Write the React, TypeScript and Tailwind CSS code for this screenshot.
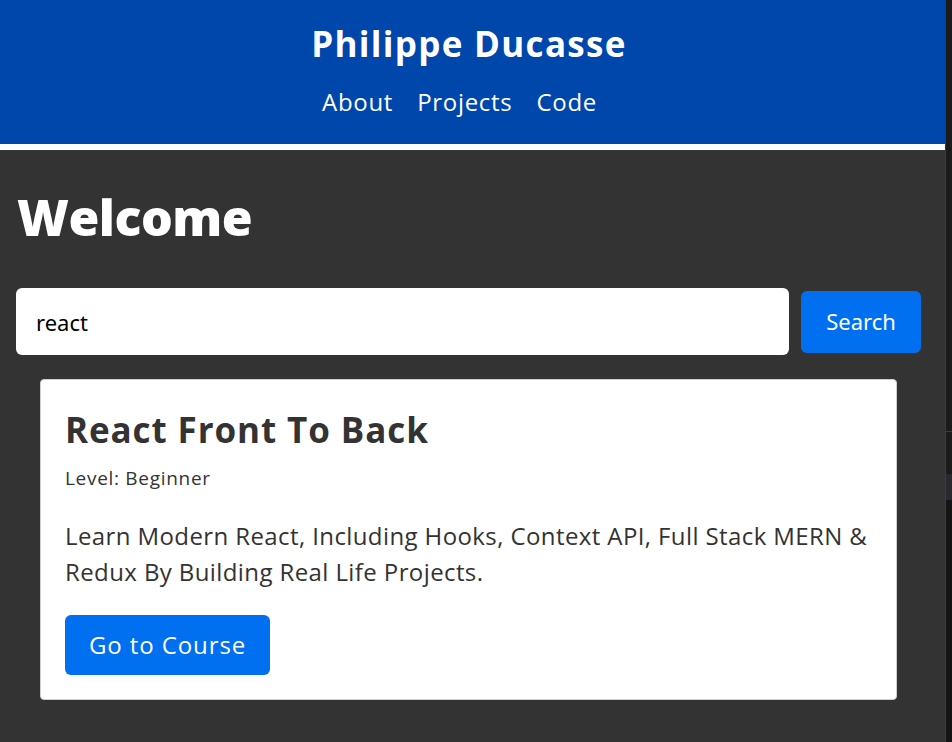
import { useState } from 'react';

const poppins = { fontFamily: '"Open Sans", "Noto Sans", sans-serif' };

const App = () => {
  const [query, setQuery] = useState('react');

  return (
    <div className="flex w-[952px] h-[742px] overflow-hidden bg-[#333333]">
      <div className="flex-1 flex flex-col" style={poppins}>
        {/* Header */}
        <header className="h-[150px] bg-[#0047ab] border-b-[6px] border-white flex flex-col items-center">
          <h1 className="mt-[22px] pr-[7px] text-[35px] leading-[44px] font-bold text-white tracking-[1.3px]">
            Philippe Ducasse
          </h1>
          <nav className="mt-[20px] flex gap-6 text-[24px] leading-[32px] text-white tracking-[0.7px] pr-[26px]">
            <a href="#">About</a>
            <a href="#">Projects</a>
            <a href="#">Code</a>
          </nav>
        </header>

        {/* Content */}
        <main className="flex-1 pl-4 pr-6">
          <h2 className="mt-[37px] text-[50px] leading-[60px] font-extrabold text-white pl-[1px] tracking-[-0.5px]">
            Welcome
          </h2>

          <form
            className="mt-[41px] flex items-center gap-3"
            onSubmit={(e) => e.preventDefault()}
          >
            <input
              type="text"
              value={query}
              onChange={(e) => setQuery(e.target.value)}
              className="flex-1 h-[67px] rounded-md bg-white px-5 text-[22px] text-black outline-none"
              style={{ fontFamily: '"Noto Sans", sans-serif' }}
            />
            <button
              type="submit"
              className="w-[120px] h-[62px] rounded-md bg-[#0070f0] text-white text-[22px]"
              style={{ fontFamily: '"Noto Sans", sans-serif' }}
            >
              Search
            </button>
          </form>

          {/* Course card */}
          <div className="mx-6 mt-[24px] bg-white border border-[#cfcfcf] rounded px-6 pt-[28px] pb-6 text-[#333333]">
            <h3 className="text-[35px] leading-[44px] font-bold tracking-[0.9px]">React Front To Back</h3>
            <p className="mt-[12px] text-[19px] leading-[28px] tracking-[0.7px]">Level: Beginner</p>
            <p className="mt-[26px] text-[24px] leading-[36px] tracking-[0.4px]">
              Learn Modern React, Including Hooks, Context API, Full Stack MERN &amp; Redux By Building Real Life Projects.
            </p>
            <button className="mt-[25px] h-[60px] px-6 rounded-md bg-[#0070f0] text-white text-[24px] tracking-[0.9px]">
              Go to Course
            </button>
          </div>
        </main>
      </div>

      {/* Right edge strip */}
      <div className="w-[7px] flex flex-col border-l border-[#3c3c3c] bg-[#1b1b1b]">
        <div className="h-[431px]" />
        <div className="h-px bg-[#3c3c3c]" />
        <div className="h-[42px]" />
        <div className="h-[26px] bg-[#2a2a2e]" />
        <div className="flex-1 bg-[#141414]" />
      </div>
    </div>
  );
};

export default App;
